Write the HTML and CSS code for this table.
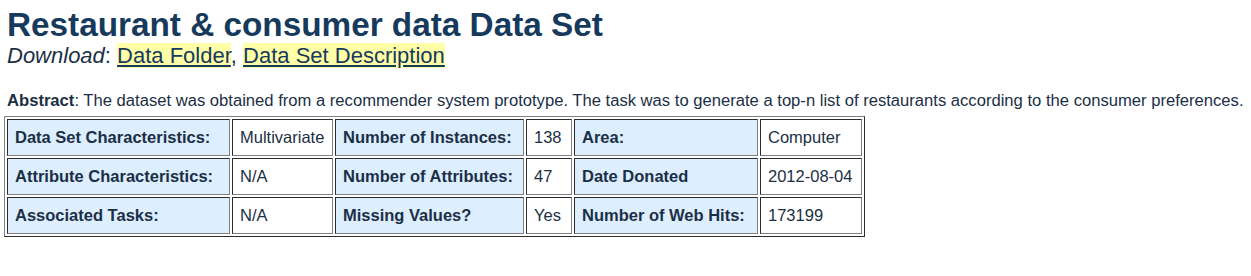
FILE: index.html
```html
<!DOCTYPE html>
<html lang="en">
<head>
    <meta charset="UTF-8">
    <title>Restaurant &amp; consumer data Data Set</title>
    <link rel="stylesheet" href="styles.css">
</head>
<body>

<div class="page">
    <div class="heading">Restaurant &amp; consumer data Data Set</div>
    <div class="download">
        <i>Download</i>: <a href="#">Data Folder</a>, <a href="#">Data Set Description</a>
    </div>

    <p class="abstract"><b>Abstract</b>: The dataset was obtained from a recommender system prototype. The task was to generate a top-n list of restaurants according to the consumer preferences.</p>

    <table class="info">
        <colgroup>
            <col class="c-label1">
            <col class="c-value">
            <col class="c-label2">
            <col class="c-num">
            <col class="c-label3">
            <col class="c-value2">
        </colgroup>
        <tr>
            <td class="label">Data Set Characteristics:</td>
            <td>Multivariate</td>
            <td class="label">Number of Instances:</td>
            <td>138</td>
            <td class="label">Area:</td>
            <td>Computer</td>
        </tr>
        <tr>
            <td class="label">Attribute Characteristics:</td>
            <td>N/A</td>
            <td class="label">Number of Attributes:</td>
            <td>47</td>
            <td class="label">Date Donated</td>
            <td>2012-08-04</td>
        </tr>
        <tr>
            <td class="label">Associated Tasks:</td>
            <td>N/A</td>
            <td class="label">Missing Values?</td>
            <td>Yes</td>
            <td class="label">Number of Web Hits:</td>
            <td>173199</td>
        </tr>
    </table>
</div>

</body>
</html>
```

FILE: styles.css
```css
body {
    margin: 0;
    font-family: "Liberation Sans", Arial, sans-serif;
    color: #1b2f45;
    background: #fff;
}

.page {
    padding: 7px 4px;
}

.heading {
    font-size: 33.3px;
    font-weight: bold;
    color: #163a5c;
    line-height: 36px;
    padding-left: 3px;
}

.download {
    font-size: 22px;
    line-height: 26px;
    color: #1b2f45;
    padding-left: 3px;
}

.download a {
    color: #163a5c;
    background-color: #ffffa8;
    text-decoration: underline;
}

.abstract {
    font-size: 16.63px;
    margin: 22px 0 0 3px;
    line-height: 19px;
    white-space: nowrap;
}

.info {
    table-layout: fixed;
    width: 861px;
    border-collapse: separate;
    border-spacing: 2px;
    border: 1px outset #808080;
    margin-top: 6px;
    font-size: 16.5px;
}

.c-label1 { width: 223px; }
.c-value { width: 101px; }
.c-label2 { width: 189px; }
.c-num { width: 46px; }
.c-label3 { width: 184px; }
.c-value2 { width: 102px; }

.info td {
    box-sizing: border-box;
    border: 1px inset #808080;
    padding: 8px 7px;
    line-height: 19px;
    white-space: nowrap;
    overflow: hidden;
}

.info td.label {
    background-color: #ddeeff;
    font-weight: bold;
    color: #1b2f45;
}
```
